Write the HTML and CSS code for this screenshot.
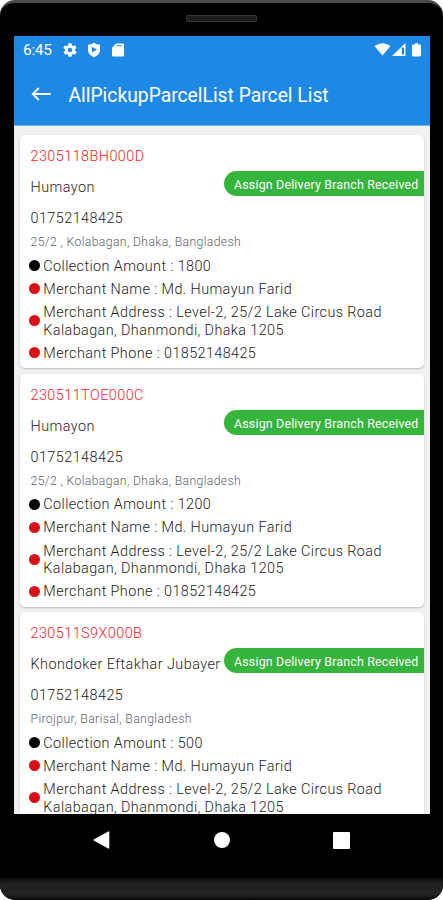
FILE: index.html
```html
<!DOCTYPE html>
<html lang="en">
<head>
<meta charset="utf-8">
<title>AllPickupParcelList Parcel List</title>
<link rel="stylesheet" href="styles.css">
</head>
<body>
<div class="phone">
  <div class="bezel-top"><span class="speaker"></span></div>
  <main class="screen">
    <header class="header">
      <div class="status">
        <span class="time">6:45</span>
        <svg class="gear" width="16" height="16" viewBox="0 0 24 24" fill="#fff"><path fill-rule="evenodd" d="M19.4 13a7.700 7.700 0 0 0 0-2l2.100-1.600a.5.5 0 0 0 .1-.6l-2-3.500a.5.5 0 0 0-.6-.2l-2.500 1a7.300 7.300 0 0 0-1.700-1l-.4-2.600a.5.5 0 0 0-.5-.5h-4a.5.5 0 0 0-.5.500l-.4 2.600a7.300 7.300 0 0 0-1.700 1l-2.500-1a.5.5 0 0 0-.6.200l-2 3.500a.5.5 0 0 0 .1.600L4.600 11a7.700 7.700 0 0 0 0 2l-2.100 1.600a.5.5 0 0 0-.1.600l2 3.500c.1.200.4.300.6.200l2.500-1a7.300 7.300 0 0 0 1.700 1l.4 2.600c0 .3.200.5.500.5h4c.3 0 .5-.2.500-.5l.4-2.600a7.300 7.300 0 0 0 1.700-1l2.500 1c.2.100.5 0 .6-.2l2-3.500a.5.5 0 0 0-.1-.6zM12 15.300a3.300 3.300 0 1 1 0-6.600 3.300 3.300 0 0 1 0 6.600z"/></svg>
        <svg class="shield" width="14" height="16" viewBox="0 0 14 16" fill="#fff"><path fill-rule="evenodd" d="M7 .8Q9.500 2.600 13 2.700V8Q13 12.700 7 15.200Q1 12.700 1 8V2.700Q4.500 2.600 7 .8zM4.900 4.700V10.500L10 7.600z"/></svg>
        <svg class="sd" width="12" height="14" viewBox="0 0 12 14" fill="#fff"><path fill-rule="evenodd" d="M4.200.5H10.700Q12 .5 12 1.800V12.200Q12 13.500 10.700 13.500H1.300Q0 13.500 0 12.200V4.700zM4.600 2.300V3.300H9.800V2.300z"/></svg>
        <span class="fill"></span>
        <svg width="48" height="16" viewBox="0 0 48 16" fill="#fff"><path d="M.5 4Q8.500-1.500 16.500 4L8.500 13.500z"/><path fill-rule="evenodd" d="M31.500 1V14H18zM30 5.500H27.800V12.500H30z"/><path d="M41 1.200H44V2.500H46Q47 2.500 47 3.500V13Q47 14.500 45.500 14.500H39.500Q38 14.500 38 13V3.500Q38 2.500 39 2.500H41z"/></svg>
      </div>
      <div class="appbar">
        <svg width="20" height="14" viewBox="0 0 20 14" fill="none" stroke="#fff" stroke-width="2"><path d="M19.500 7H1.800M7.800 1L1.800 7L7.800 13"/></svg>
        <h1>AllPickupParcelList Parcel List</h1>
      </div>
    </header>
    <section class="list">
      <article class="card">
        <span class="badge">Assign Delivery Branch Received</span>
        <div class="line id">2305118BH000D</div>
        <div class="line">Humayon</div>
        <div class="line">01752148425</div>
        <div class="address">25/2 , Kolabagan, Dhaka, Bangladesh</div>
        <ul>
          <li class="amount"><span>Collection Amount : 1800</span></li>
          <li><span>Merchant Name : Md. Humayun Farid</span></li>
          <li class="tall"><span>Merchant Address : Level-2, 25/2 Lake Circus Road<br>Kalabagan, Dhanmondi, Dhaka 1205</span></li>
          <li><span>Merchant Phone : 01852148425</span></li>
        </ul>
      </article>
      <article class="card">
        <span class="badge">Assign Delivery Branch Received</span>
        <div class="line id">230511TOE000C</div>
        <div class="line">Humayon</div>
        <div class="line">01752148425</div>
        <div class="address">25/2 , Kolabagan, Dhaka, Bangladesh</div>
        <ul>
          <li class="amount"><span>Collection Amount : 1200</span></li>
          <li><span>Merchant Name : Md. Humayun Farid</span></li>
          <li class="tall"><span>Merchant Address : Level-2, 25/2 Lake Circus Road<br>Kalabagan, Dhanmondi, Dhaka 1205</span></li>
          <li><span>Merchant Phone : 01852148425</span></li>
        </ul>
      </article>
      <article class="card">
        <span class="badge">Assign Delivery Branch Received</span>
        <div class="line id">230511S9X000B</div>
        <div class="line">Khondoker Eftakhar Jubayer</div>
        <div class="line">01752148425</div>
        <div class="address">Pirojpur, Barisal, Bangladesh</div>
        <ul>
          <li class="amount"><span>Collection Amount : 500</span></li>
          <li><span>Merchant Name : Md. Humayun Farid</span></li>
          <li class="tall"><span>Merchant Address : Level-2, 25/2 Lake Circus Road<br>Kalabagan, Dhanmondi, Dhaka 1205</span></li>
        </ul>
      </article>
    </section>
  </main>
  <nav class="nav">
    <svg width="17" height="18" viewBox="0 0 17 18" fill="#fff"><path d="M15.200.5Q16.300 0 16.300 1V17Q16.300 18 15.200 17.500L1 9.800Q0 9 1 8.200z"/></svg>
    <span class="home"></span>
    <span class="recent"></span>
  </nav>
  <div class="chin"></div>
</div>
</body>
</html>
```
FILE: styles.css
```css
* { box-sizing: border-box; }
body { margin: 0; background: #fff; font-family: Roboto, "Liberation Sans", sans-serif; }
.phone {
  width: 443px;
  height: 900px;
  display: flex;
  flex-direction: column;
  background: #000;
  border-radius: 15px;
  border-top: 3px solid #4b4b4b;
  overflow: hidden;
}
.bezel-top { height: 33px; flex: none; display: flex; justify-content: center; padding-top: 12px; }
.speaker { width: 71px; height: 7px; border: 1px solid #363636; border-radius: 2px; background: #1c1c1c; }
.screen {
  width: 416px;
  height: 778px;
  flex: none;
  margin-left: 14px;
  background: #f1f1f3;
  overflow: hidden;
}
.header { height: 90px; background: #1e88e5; color: #fff; border-bottom: 1px solid #6cb3ef; }
.status { height: 27px; display: flex; align-items: center; padding: 0 8px 0 9px; }
.time { width: 30px; font-size: 15.5px; letter-spacing: -0.3px; white-space: nowrap; }
.gear { margin-left: 9px; }
.shield { margin-left: 9px; }
.sd { margin-left: 11px; }
.fill { flex: 1; }
.appbar { height: 62px; display: flex; align-items: center; padding: 0 0 0 17px; }
h1 { margin: 2px 0 0 17.5px; font-size: 19.3px; font-weight: 400; white-space: nowrap; }
.list { padding: 9px 6px 0; display: flex; flex-direction: column; gap: 5.7px; }
.card {
  position: relative;
  height: 233px;
  flex: none;
  padding: 6px 0 0 10.500px;
  background: #fff;
  border-radius: 5px;
  box-shadow: 0 1px 2px rgba(80, 85, 90, 0.35);
  color: #1b1b1b;
  font-size: 14.4px;
  font-weight: 300;
  letter-spacing: 0.45px;
  white-space: nowrap;
}
.line { height: 31px; line-height: 32px; }
.id { color: #f3232b; }
.address { height: 17px; line-height: 17px; font-size: 12.2px; letter-spacing: 0.38px; color: #5d626a; }
.badge {
  position: absolute;
  top: 36px;
  right: 0;
  width: 200px;
  height: 25px;
  padding-left: 10px;
  border-radius: 13px 0 0 13px;
  background: #35b53b;
  color: #fff;
  font-size: 12.4px;
  font-weight: 400;
  line-height: 27px;
  letter-spacing: 0.19px;
}
ul { list-style: none; margin: 3px 0 0; padding: 0; letter-spacing: 0.4px; }
li { height: 23px; line-height: 17.5px; display: grid; grid-template-columns: 11px 1fr; column-gap: 3.6px; align-items: center; margin-left: -1.8px; }
li > span { padding-top: 2px; }
li::before { content: ""; width: 11px; height: 11px; border-radius: 50%; background: #d80f16; }
li.amount::before { background: #000; }
li.tall { height: 41px; }
.nav { height: 52px; flex: none; display: grid; grid-template-columns: 120px 120px 120px; justify-content: center; justify-items: center; align-items: center; }
.home { width: 16px; height: 16px; border-radius: 50%; background: #fff; }
.recent { width: 17px; height: 17px; border-radius: 1px; background: #fff; }
.chin { flex: 1; margin-top: 12px; background: linear-gradient(#0b0b0b, #202020 25%, #242424 75%, #080808); }
```
